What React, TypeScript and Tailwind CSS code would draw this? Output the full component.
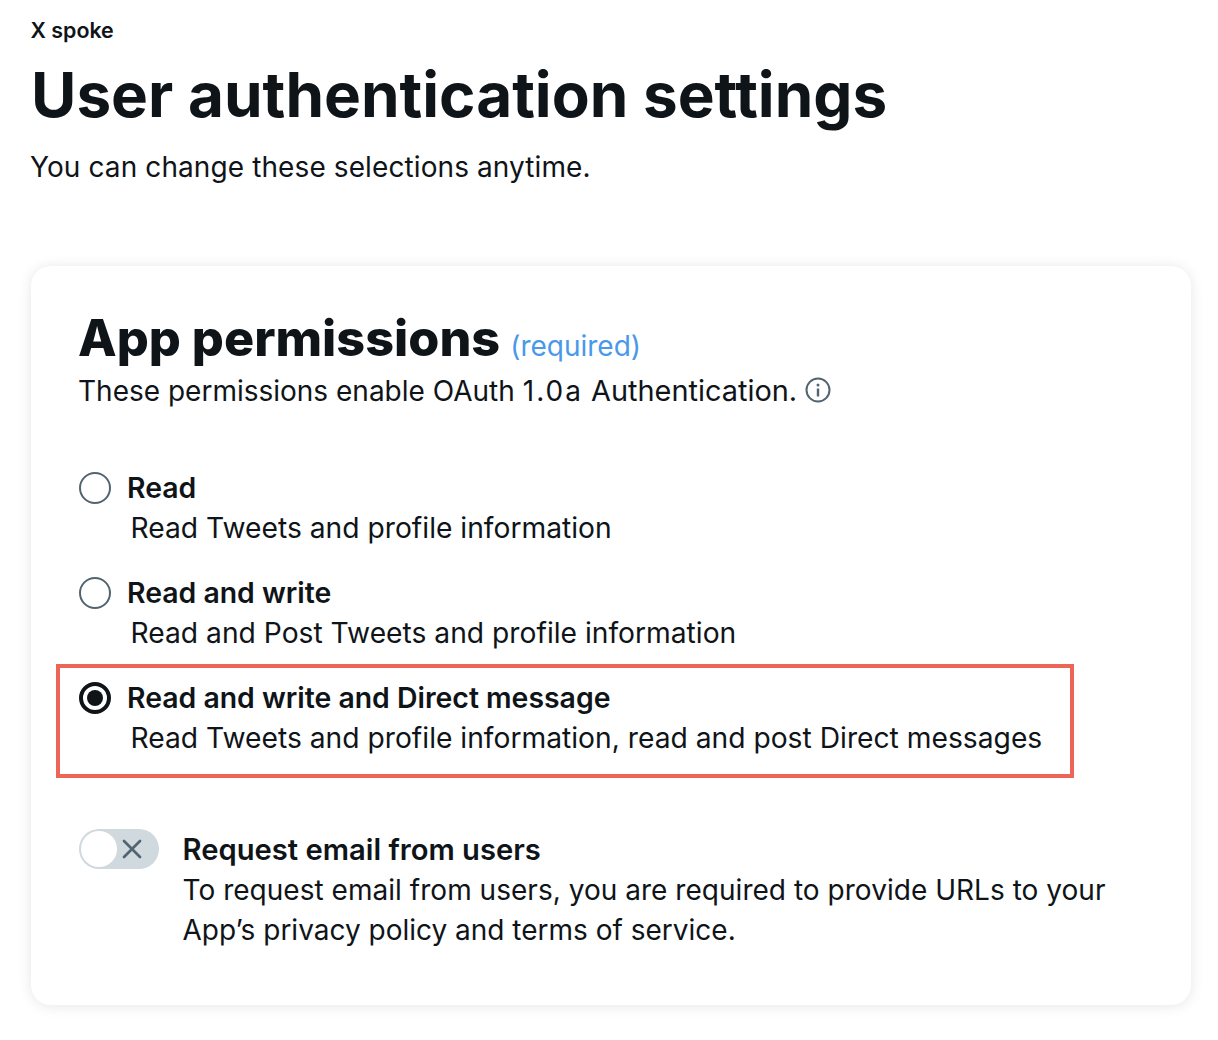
import { X } from "lucide-react";

function Radio({ checked }: { checked?: boolean }) {
  return (
    <div
      className={
        checked
          ? "w-8 h-8 rounded-full border-[4px] border-[#0f1419] flex items-center justify-center shrink-0"
          : "w-8 h-8 rounded-full border-2 border-[#536471] shrink-0"
      }
    >
      {checked && <div className="w-4 h-4 rounded-full bg-[#0f1419]" />}
    </div>
  );
}

function Option({ title, desc, checked }: { title: string; desc: string; checked?: boolean }) {
  return (
    <div className="relative h-[105px]">
      <div className="flex items-center gap-4 h-10">
        <Radio checked={checked} />
        <span className="text-[28.4px] leading-10 font-semibold">{title}</span>
      </div>
      <div className="pl-[51.5px] text-[28.22px] leading-10">{desc}</div>
      {checked && (
        <div className="absolute left-[-23px] top-[-14px] w-[1018px] h-[114px] border-[4px] border-[#ec6557]" />
      )}
    </div>
  );
}

export default function App() {
  return (
    <div className="w-[1218px] h-[1040px] bg-white overflow-hidden text-[#0f1419] font-['Inter','Liberation_Sans',sans-serif] pl-[31px] pt-[17px]">
      <div className="text-[21.4px] leading-[26px] font-semibold -ml-[0.5px]">X spoke</div>
      <h1 className="text-[62px] leading-[72px] font-bold mt-[16px]">User authentication settings</h1>
      <p className="text-[28px] tracking-[0.1px] leading-[36px] mt-[18px] -ml-px">You can change these selections anytime.</p>
      <div className="mt-[81px] w-[1160px] h-[739px] rounded-[20px] bg-white shadow-[0_1px_14px_rgba(0,0,0,0.1)] pl-[48px] pt-[42px]">
        <div className="flex items-baseline gap-[10px] -ml-px">
          <h2 className="text-[50.3px] leading-[60px] font-extrabold">App permissions</h2>
          <span className="text-[28px] text-[#4a99e9]">(required)</span>
        </div>
        <div className="flex items-center gap-[8px] mt-[3px] -ml-px">
          <span className="text-[28px] leading-10">
            These permissions enable OAuth <span className="tracking-[2.1px]">1.0a</span> <span className="text-[28.9px]">Authentication.</span>
          </span>
          <svg viewBox="0 0 26 26" className="w-[26px] h-[26px] -mt-[2px] text-[#536471]" fill="none" stroke="currentColor">
            <circle cx="13" cy="13" r="11.5" strokeWidth="2" />
            <circle cx="13" cy="8" r="1.5" fill="currentColor" stroke="none" />
            <path d="M13 11.5v8" strokeWidth="2.4" />
          </svg>
        </div>
        <div className="mt-[57px]">
          <Option title="Read" desc="Read Tweets and profile information" />
          <Option title="Read and write" desc="Read and Post Tweets and profile information" />
          <Option title="Read and write and Direct message" desc="Read Tweets and profile information, read and post Direct messages" checked />
        </div>
        <div className="flex gap-6 mt-[47px]">
          <div className="relative w-20 h-10 rounded-full bg-[#cfd9de] shrink-0 -mt-px">
            <div className="absolute left-[2px] top-[2px] w-9 h-9 rounded-full bg-white" />
            <X className="absolute left-[37px] top-1 w-8 h-8 text-[#536471]" strokeWidth={2} />
          </div>
          <div className="text-[28px] leading-10 -ml-[0.5px]">
            <div className="font-semibold text-[29.2px]">Request email from users</div>
            <div className="tracking-[0.03px]">To request email from users, you are required to provide URLs to your</div>
            <div>App’s privacy policy and terms of service.</div>
          </div>
        </div>
      </div>
    </div>
  );
}
